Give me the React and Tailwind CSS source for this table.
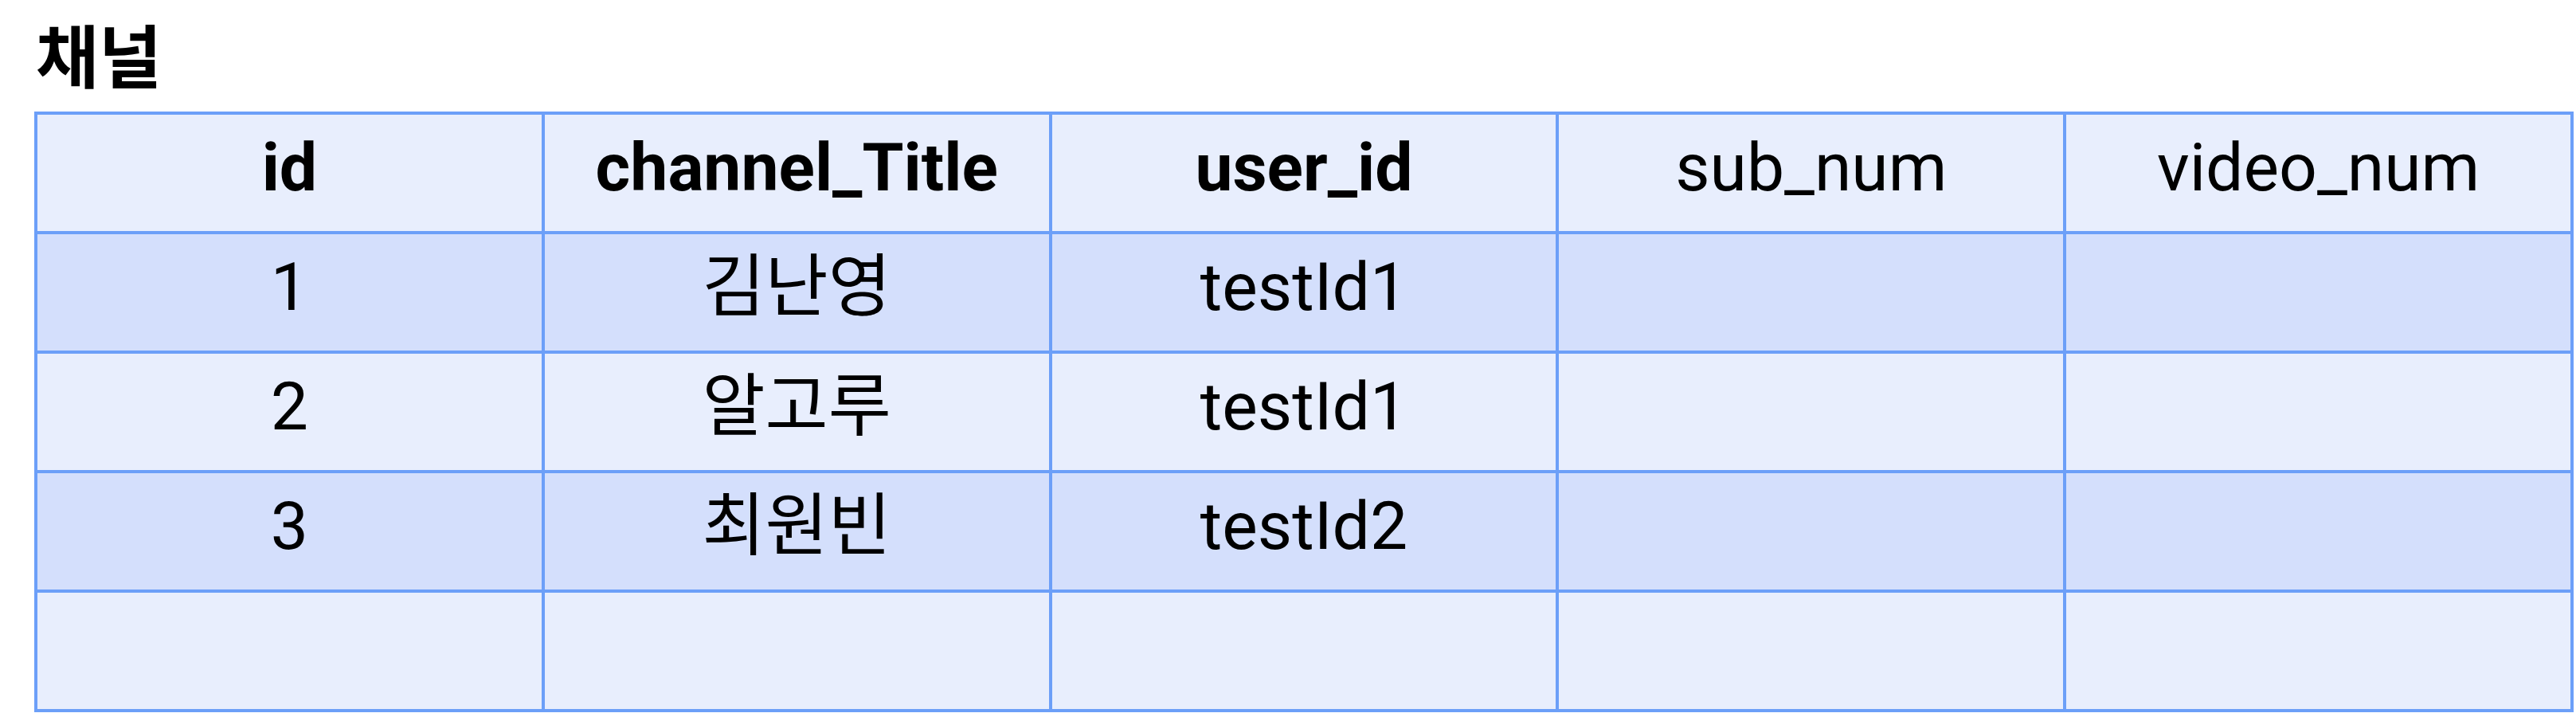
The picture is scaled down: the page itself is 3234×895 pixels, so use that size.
const COLUMNS = [
  { key: 'id', label: 'id', bold: true },
  { key: 'title', label: 'channel_Title', bold: true },
  { key: 'user', label: 'user_id', bold: true },
  { key: 'subs', label: 'sub_num', bold: false },
  { key: 'videos', label: 'video_num', bold: false },
];

const ROWS = [
  { id: 1, title: '김난영', user: 'testId1', subs: '', videos: '' },
  { id: 2, title: '알고루', user: 'testId1', subs: '', videos: '' },
  { id: 3, title: '최원빈', user: 'testId2', subs: '', videos: '' },
  { id: '', title: '', user: '', subs: '', videos: '' },
];

const cell = 'border-4 border-[#6c9ff8] h-[150px] p-0 pb-[12px] text-center align-middle';

export default function App() {
  return (
    <div className="bg-white pl-[43px] pt-[12px] text-black" style={{ fontFamily: "Roboto, 'Noto Sans CJK KR', sans-serif" }}>
      <h2 className="text-[86px] font-bold leading-[110px] mb-[18px] pl-[2px]" style={{ fontFamily: "'Noto Sans CJK KR', sans-serif" }}>채널</h2>
      <table className="w-[3188px] table-fixed border-collapse text-[84px] leading-none">
        <thead>
          <tr className="bg-[#e8eefd]">
            {COLUMNS.map(c => (
              <th key={c.key} className={`${cell} ${c.bold ? 'font-bold' : 'font-normal'}`}>{c.label}</th>
            ))}
          </tr>
        </thead>
        <tbody>
          {ROWS.map((r, i) => (
            <tr key={i} className={i % 2 === 0 ? 'bg-[#d4dffc]' : 'bg-[#e8eefd]'}>
              {COLUMNS.map(c => (
                <td key={c.key} className={`${cell} ${c.key === 'title' ? 'text-[86px]' : ''}`}>{r[c.key]}</td>
              ))}
            </tr>
          ))}
        </tbody>
      </table>
    </div>
  );
}
